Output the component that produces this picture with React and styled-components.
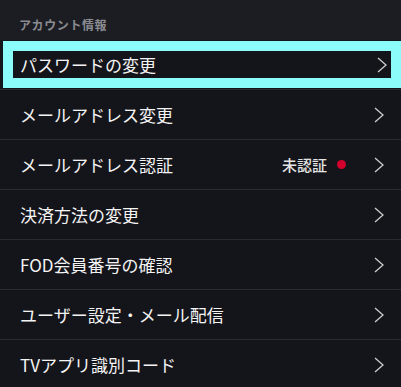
import React from 'react'
import styled, { createGlobalStyle } from 'styled-components'

const GlobalStyle = createGlobalStyle`
  html, body {
    margin: 0;
    padding: 0;
    background: #14151b;
    overflow: hidden;
  }
  body {
    font-family: "Noto Sans CJK JP", "Noto Sans", sans-serif;
    -webkit-font-smoothing: antialiased;
  }
`;

const Page = styled.div`
  width: 401px;
  background: #14151b;
`;

const SectionHead = styled.div`
  height: 40px;
  box-sizing: border-box;
  padding: 15px 0 0 19px;
  background: #1c1d23;
  color: #8b8c92;
  font-size: 12px;
  font-weight: 700;
  letter-spacing: 0.6px;
  line-height: 20px;
`;

const MenuList = styled.ul`
  list-style: none;
  margin: 0;
  padding: 0;
`;

const MenuRow = styled.li`
  height: 49px;
  display: flex;
  border-bottom: 1px solid #2b2c32;
`;

const MenuLink = styled.a`
  flex: 1;
  display: flex;
  align-items: center;
  text-decoration: none;
  color: #f4f4f4;
  font-size: 17px;
  line-height: 1;
  padding: 0 ${p => (p.$focused ? '14px' : '17px')} 0 ${p => (p.$focused ? '17px' : '20px')};
  margin: ${p => (p.$focused ? '1px 0 1px 3px' : '0')};
  box-shadow: ${p => (p.$focused ? 'inset 0 0 0 10px #8cfcfa' : 'none')};
`;

const Label = styled.span`
  flex: 1;
  white-space: nowrap;
`;

const Status = styled.span`
  display: flex;
  align-items: center;
  gap: 10px;
  margin-right: 28px;
  color: #e4e4e4;
  font-size: 15px;
  font-weight: 500;
`;

const Dot = styled.i`
  width: 9px;
  height: 9px;
  border-radius: 50%;
  background: #d2002d;
`;

const Chevron = () => (
  <svg width="10" height="16" viewBox="0 0 10 16" fill="none">
    <polyline points="1,1 9,8 1,15" stroke="#cdcdcd" strokeWidth="1.3" />
  </svg>
);

const items = [
  { label: 'パスワードの変更', focused: true },
  { label: 'メールアドレス変更' },
  { label: 'メールアドレス認証', status: '未認証' },
  { label: '決済方法の変更' },
  { label: 'FOD会員番号の確認' },
  { label: 'ユーザー設定・メール配信' },
  { label: 'TVアプリ識別コード' },
];

export default function App() {
  return (
    <>
      <GlobalStyle />
      <Page>
        <SectionHead>アカウント情報</SectionHead>
        <MenuList>
          {items.map(item => (
            <MenuRow key={item.label}>
              <MenuLink href="#" $focused={item.focused}>
                <Label>{item.label}</Label>
                {item.status && (
                  <Status>
                    {item.status}
                    <Dot />
                  </Status>
                )}
                <Chevron />
              </MenuLink>
            </MenuRow>
          ))}
        </MenuList>
      </Page>
    </>
  )
}
